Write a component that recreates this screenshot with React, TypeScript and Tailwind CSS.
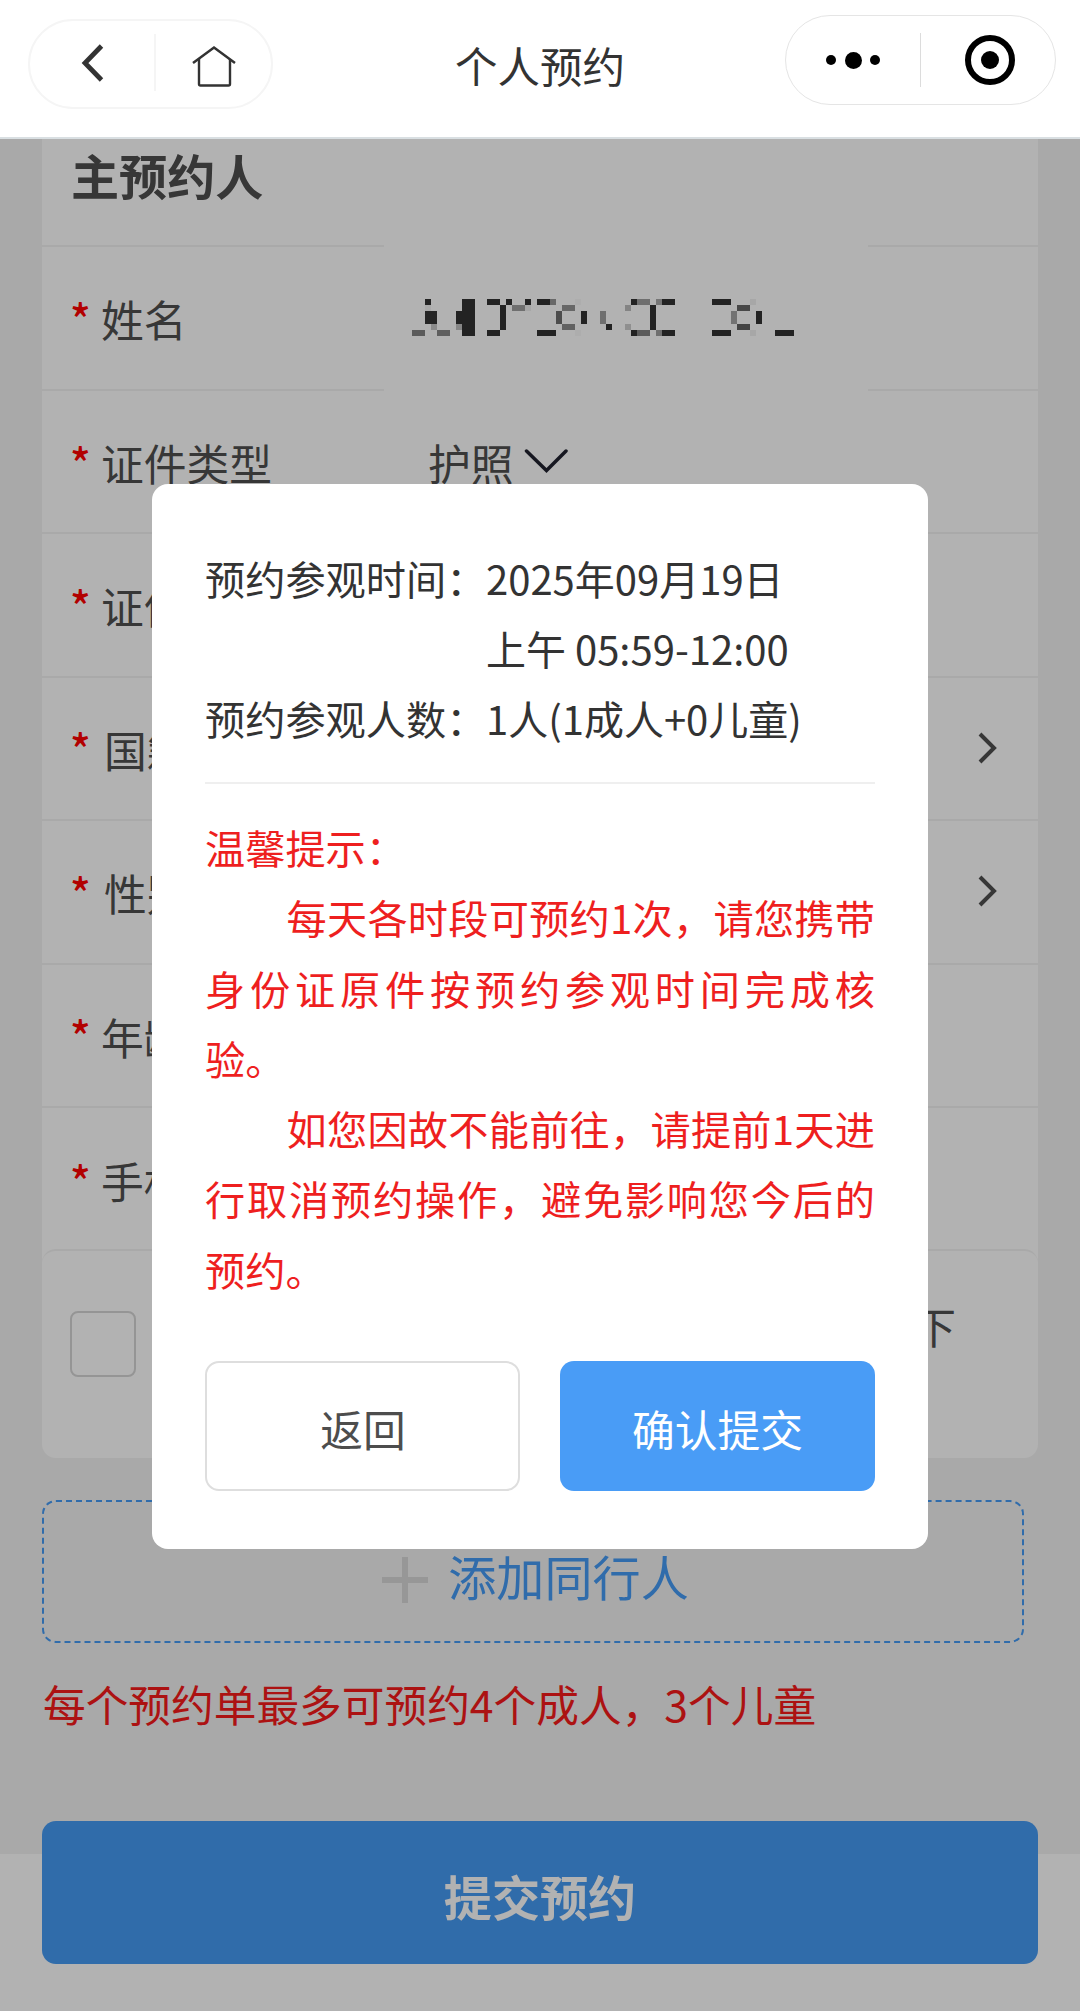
import type { ReactNode } from "react";

const labels = ["姓名", "证件类型", "证件号码", "国籍", "性别", "年龄", "手机号码"];

// Censored name: [x, y, width, height, colour] on a 410x60 grid scaled by 3.
const mosaic: [number, number, number, number, string][] = [
  [75, 42, 18, 18, "#333333"],
  [75, 60, 18, 18, "#f3f3f3"],
  [75, 78, 36, 39, "#363636"],
  [93, 117, 18, 18, "#c8c8c8"],
  [36, 135, 39, 18, "#838383"],
  [111, 135, 39, 18, "#898989"],
  [168, 78, 18, 39, "#333333"],
  [168, 117, 18, 18, "#c2c2c2"],
  [186, 42, 39, 111, "#333333"],
  [261, 42, 39, 18, "#333333"],
  [300, 60, 18, 75, "#333333"],
  [261, 135, 39, 18, "#333333"],
  [318, 42, 18, 18, "#333333"],
  [336, 60, 39, 18, "#a0a0a0"],
  [375, 42, 18, 18, "#333333"],
  [375, 60, 18, 18, "#efefef"],
  [411, 42, 39, 18, "#333333"],
  [450, 42, 18, 18, "#959595"],
  [411, 135, 57, 18, "#333333"],
  [468, 78, 18, 39, "#6e6e6e"],
  [486, 60, 39, 18, "#949494"],
  [486, 117, 39, 18, "#8c8c8c"],
  [525, 42, 18, 18, "#f8f8f8"],
  [525, 135, 18, 18, "#f8f8f8"],
  [543, 78, 18, 39, "#333333"],
  [600, 78, 18, 39, "#a0a0a0"],
  [618, 117, 18, 18, "#333333"],
  [675, 60, 18, 18, "#bebebe"],
  [675, 117, 18, 18, "#cdcdcd"],
  [693, 42, 18, 18, "#333333"],
  [711, 42, 39, 18, "#a0a0a0"],
  [750, 60, 18, 75, "#333333"],
  [768, 42, 18, 18, "#a8a8a8"],
  [786, 42, 39, 18, "#333333"],
  [693, 135, 18, 18, "#333333"],
  [711, 135, 39, 18, "#838383"],
  [768, 135, 18, 18, "#a0a0a0"],
  [786, 135, 39, 18, "#333333"],
  [936, 42, 57, 18, "#333333"],
  [936, 135, 57, 18, "#333333"],
  [993, 78, 18, 39, "#a5a5a5"],
  [1011, 60, 39, 18, "#686868"],
  [1011, 117, 39, 18, "#626262"],
  [1050, 42, 18, 18, "#efefef"],
  [1050, 135, 18, 18, "#efefef"],
  [1068, 78, 18, 39, "#333333"],
  [1125, 135, 57, 18, "#333333"],
];

function Header() {
  return (
    <header className="relative z-20 grid h-[139px] shrink-0 grid-cols-[245px_1fr_271px] items-start border-b-2 border-[#d9dfe2] bg-white pr-[24px] pl-[28px]">
      <div className="mt-[19px] flex h-[90px] items-center rounded-full border-2 border-[#f5f5f5]">
        <div className="flex h-full w-[124px] items-center justify-center">
          <svg width="24" height="40" viewBox="0 0 24 40" fill="none" className="-mt-[3px] ml-[1px]">
            <path d="M20.500 3 L4 20 L20.500 37" stroke="#333" strokeWidth="4.8" />
          </svg>
        </div>
        <div className="-mt-[4px] h-[57px] w-[2px] bg-[#f5f5f5]" />
        <div className="flex h-full flex-1 items-center justify-center">
          <svg width="44" height="44" viewBox="0 0 44 44" fill="none" className="mt-[5px]">
            <path d="M1 18 L22 2.500 L43 18" stroke="#333" strokeWidth="2.500" />
            <path d="M7 14 V39 Q7 40.500 8.500 40.500 H36.500 Q38 40.500 38 39 V14" stroke="#333" strokeWidth="2.400" />
          </svg>
        </div>
      </div>
      <h1 className="mt-[34px] ml-[22px] text-center text-[42.500px] leading-[62px] text-[#333]">个人预约</h1>
      <div className="mt-[15px] flex h-[90px] items-center rounded-full border border-[#e5e5e5]">
        <div className="flex w-[134px] items-center justify-center gap-[8.500px]">
          <span className="size-[10px] rounded-full bg-black" />
          <span className="size-[17px] rounded-full bg-black" />
          <span className="size-[10px] rounded-full bg-black" />
        </div>
        <div className="h-[54px] w-px bg-[#dcdcdc]" />
        <div className="flex flex-1 items-center justify-center pl-[4px]">
          <span className="flex size-[50px] items-center justify-center rounded-full border-[6.500px] border-black">
            <span className="size-[18px] rounded-full bg-black" />
          </span>
        </div>
      </div>
    </header>
  );
}

function Row({ label, first, last, children }: { label: string; first?: boolean; last?: boolean; children?: ReactNode }) {
  return (
    <div
      className={
        "relative flex items-center whitespace-nowrap pl-[28px] text-[#4f4f4f] " +
        (first ? "h-[143.930px] " : "h-[143.430px] ") +
        (last ? "" : "border-b-2 border-[#f3f3f3]")
      }
    >
      <span className="w-[31px] pb-[2px] text-[42.750px] font-medium text-[#ff0000]">*</span>
      <span className={"w-[329px] pt-[1px] text-[42.750px] " + (label === "国籍" || label === "性别" ? "pl-[3px]" : "")}>
        {label}
      </span>
      {children}
    </div>
  );
}

function RightChevron() {
  return (
    <svg width="20" height="32" viewBox="0 0 20 32" fill="none" className="mt-[-1px] mr-[40px] ml-auto">
      <path d="M2 2 L16 16 L2 30" stroke="#4f4f4f" strokeWidth="4" />
    </svg>
  );
}

function Form() {
  return (
    <section className="mx-[42px] shrink-0 overflow-hidden rounded-b-[14px] bg-white">
      <div className="flex h-[108px] items-start border-b-2 border-[#f3f3f3] pl-[29px]">
        <h2 className="text-[48.100px] leading-[71px] font-bold text-[#4f4f4f]">主预约人</h2>
      </div>
      {labels.map((label, i) => (
        <Row key={label} label={label} first={i === 0} last={i === labels.length - 1}>
          {i === 0 && (
            <div className="absolute top-[-4px] left-[342px] z-10 h-[152px] w-[484px] bg-white">
              <svg width="410" height="60" viewBox="0 0 1230 180" shapeRendering="crispEdges" className="mt-[42px] ml-[16px]">
                {mosaic.map(([x, y, w, h, c]) => (
                  <rect key={`${x}-${y}`} x={x} y={y} width={w} height={h} fill={c} />
                ))}
              </svg>
            </div>
          )}
          {i === 1 && (
            <span className="flex items-center text-[42.750px]">
              <span className="ml-[-2px] pt-[1px]">护照</span>
              <svg width="44" height="26" viewBox="0 0 44 26" fill="none" className="mt-[-1px] ml-[10px]">
                <path d="M2.500 3 L22.500 22.500 L42 3" stroke="#20222f" strokeWidth="3.500" strokeLinecap="round" />
              </svg>
            </span>
          )}
          {(i === 3 || i === 4) && <RightChevron />}
        </Row>
      ))}
      <div className="-mt-[2px] flex h-[208.500px] items-start justify-between rounded-[14px] border-t-2 border-[#f3f3f3] pt-[60px] pr-[82px] pl-[28px]">
        <span className="size-[66px] rounded-[8px] border-2 border-[#d6d6d6]" />
        <span className="-mt-[17px] text-[42.750px] leading-[62px] text-[#4f4f4f]">下</span>
      </div>
    </section>
  );
}

function Dialog() {
  return (
    <div className="h-[1065px] w-[776px] rounded-[16px] bg-white px-[53px] pt-[58.500px] text-[40.200px] text-[#333]">
      <div className="grid grid-cols-[281px_1fr] leading-[70px] whitespace-nowrap">
        <span>预约参观时间：</span>
        <span className="text-[40px]">
          2025年09月19日
          <br />
          上午 05:59-12:00
        </span>
        <span>预约参观人数：</span>
        <span className="text-[40px]">1人(1成人+0儿童)</span>
      </div>
      <div className="mt-[29.500px] mb-[28px] h-[2px] bg-[#efefef]" />
      <div className="text-justify leading-[70.250px] text-[#ee1f1f]">
        <p>温馨提示：</p>
        <p className="indent-[81.500px]">每天各时段可预约1次，请您携带身份证原件按预约参观时间完成核验。</p>
        <p className="indent-[81.500px]">如您因故不能前往，请提前1天进行取消预约操作，避免影响您今后的预约。</p>
      </div>
      <div className="mt-[57px] flex gap-[40px] text-[42.750px]">
        <button className="h-[130px] w-[315px] shrink-0 rounded-[14px] border-2 border-[#dedede] pt-[5px] pl-[1px] text-[#4d4d4d]">返回</button>
        <button className="h-[130px] w-[315px] shrink-0 rounded-[14px] bg-[#499cf6] pt-[5px] text-white">确认提交</button>
      </div>
    </div>
  );
}

export default function App() {
  return (
    <div
      lang="zh-CN"
      className="relative flex h-[2011px] w-[1080px] flex-col overflow-hidden bg-[#f3f3f3] font-['Noto_Sans_CJK_SC',sans-serif]"
    >
      <Header />
      <Form />
      <div className="mt-[42px] ml-[42px] flex h-[143px] w-[982px] shrink-0 items-center justify-center rounded-[14px] border-2 border-dashed border-[#469bf5]">
        <svg width="46" height="46" viewBox="0 0 46 46" className="mt-[17px] ml-[5px]">
          <path d="M23 0 V46 M0 23 H46" stroke="#d8d8d8" strokeWidth="6" />
        </svg>
        <span className="ml-[20px] pt-[7px] text-[48.100px] text-[#469bf5]">添加同行人</span>
      </div>
      <p className="mt-[30px] ml-[43px] text-[42.700px] leading-[60px] text-[#f71a1a]">每个预约单最多可预约4个成人，3个儿童</p>
      <footer className="absolute inset-x-0 bottom-0 flex h-[157px] items-end bg-white px-[42px] pb-[47px]">
        <button className="h-[143px] w-full shrink-0 rounded-[14px] bg-[#469bf4] pt-[5px] text-[48.100px] font-bold text-white">
          提交预约
        </button>
      </footer>
      <div className="absolute inset-0 z-10 flex items-start justify-center bg-black/30 pt-[484px]">
        <Dialog />
      </div>
    </div>
  );
}
